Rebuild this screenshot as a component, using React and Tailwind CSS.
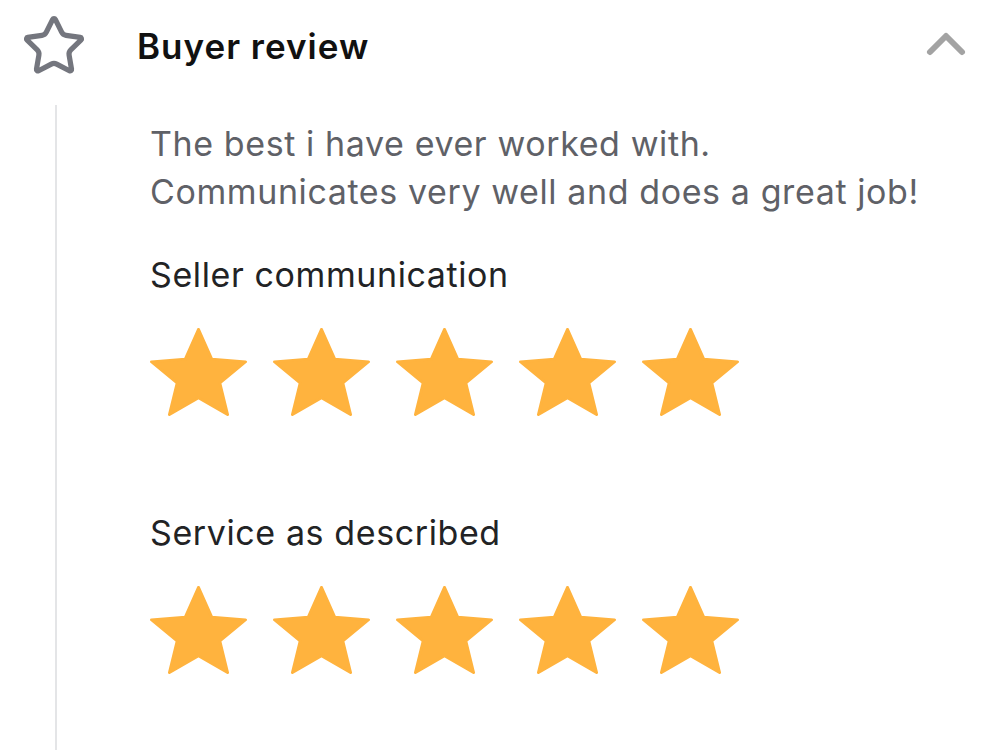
import React from 'react'

const STAR_OUTLINE = 'M11.525 2.295a.53.53 0 0 1 .95 0l2.31 4.679a2.123 2.123 0 0 0 1.595 1.16l5.166.756a.53.53 0 0 1 .294.904l-3.736 3.638a2.123 2.123 0 0 0-.611 1.878l.882 5.14a.53.53 0 0 1-.771.56l-4.618-2.428a2.122 2.122 0 0 0-1.973 0L6.396 21.01a.53.53 0 0 1-.77-.56l.881-5.139a2.122 2.122 0 0 0-.611-1.879L2.16 9.795a.53.53 0 0 1 .294-.906l5.165-.755a2.122 2.122 0 0 0 1.597-1.16z'
const STAR_SOLID = 'M12 17.27L18.18 21l-1.64-7.03L22 9.24l-7.19-.61L12 2 9.19 8.63 2 9.24l5.46 4.73L5.82 21z'

function SolidStar() {
  return (
    <svg viewBox="1.7 1.7 20.6 19.6" preserveAspectRatio="none" className="w-[97px] h-[88px] shrink-0">
      <path d={STAR_SOLID} fill="#ffb33e" stroke="#ffb33e" strokeWidth="0.6" strokeLinejoin="round" />
    </svg>
  )
}

function Rating({ label }) {
  return (
    <div>
      <p className="text-[34px] leading-[40px] tracking-[0.6px] text-[#222325]">{label}</p>
      <div className="flex gap-[26px] mt-[33px]">
        {[0, 1, 2, 3, 4].map(i => (
          <SolidStar key={i} />
        ))}
      </div>
    </div>
  )
}

export default function App() {
  return (
    <div className="w-[1000px] h-[750px] bg-white overflow-hidden font-['Inter',sans-serif]">
      <div className="flex items-center h-[92px] pl-[21px] pr-[30px]">
        <svg viewBox="0 0 24 24" className="w-[66px] h-[66px] shrink-0">
          <path d={STAR_OUTLINE} fill="none" stroke="#74767e" strokeWidth="1.9" strokeLinejoin="round" />
        </svg>
        <h2 className="ml-[50px] text-[35px] font-semibold text-[#111] tracking-[1px]">Buyer review</h2>
        <svg viewBox="0 0 24 24" className="ml-auto w-[48px] h-[48px]" fill="none" stroke="#a3a3a3" strokeWidth="3" strokeLinecap="round" strokeLinejoin="round">
          <path d="m4 15 8-8 8 8" />
        </svg>
      </div>

      <div className="flex">
        <div className="ml-[55px] w-[2px] bg-[#e4e5e7] h-[660px] mt-[13px]" />
        <div className="ml-[93px] pt-[28px]">
          <p className="text-[34px] leading-[48px] tracking-[0.6px] text-[#5f6167]">
            The best i have ever worked with.
            <br />
            Communicates very well and does a great job!
          </p>
          <div className="mt-[39px]">
            <Rating label="Seller communication" />
          </div>
          <div className="mt-[97px]">
            <Rating label="Service as described" />
          </div>
        </div>
      </div>
    </div>
  )
}
